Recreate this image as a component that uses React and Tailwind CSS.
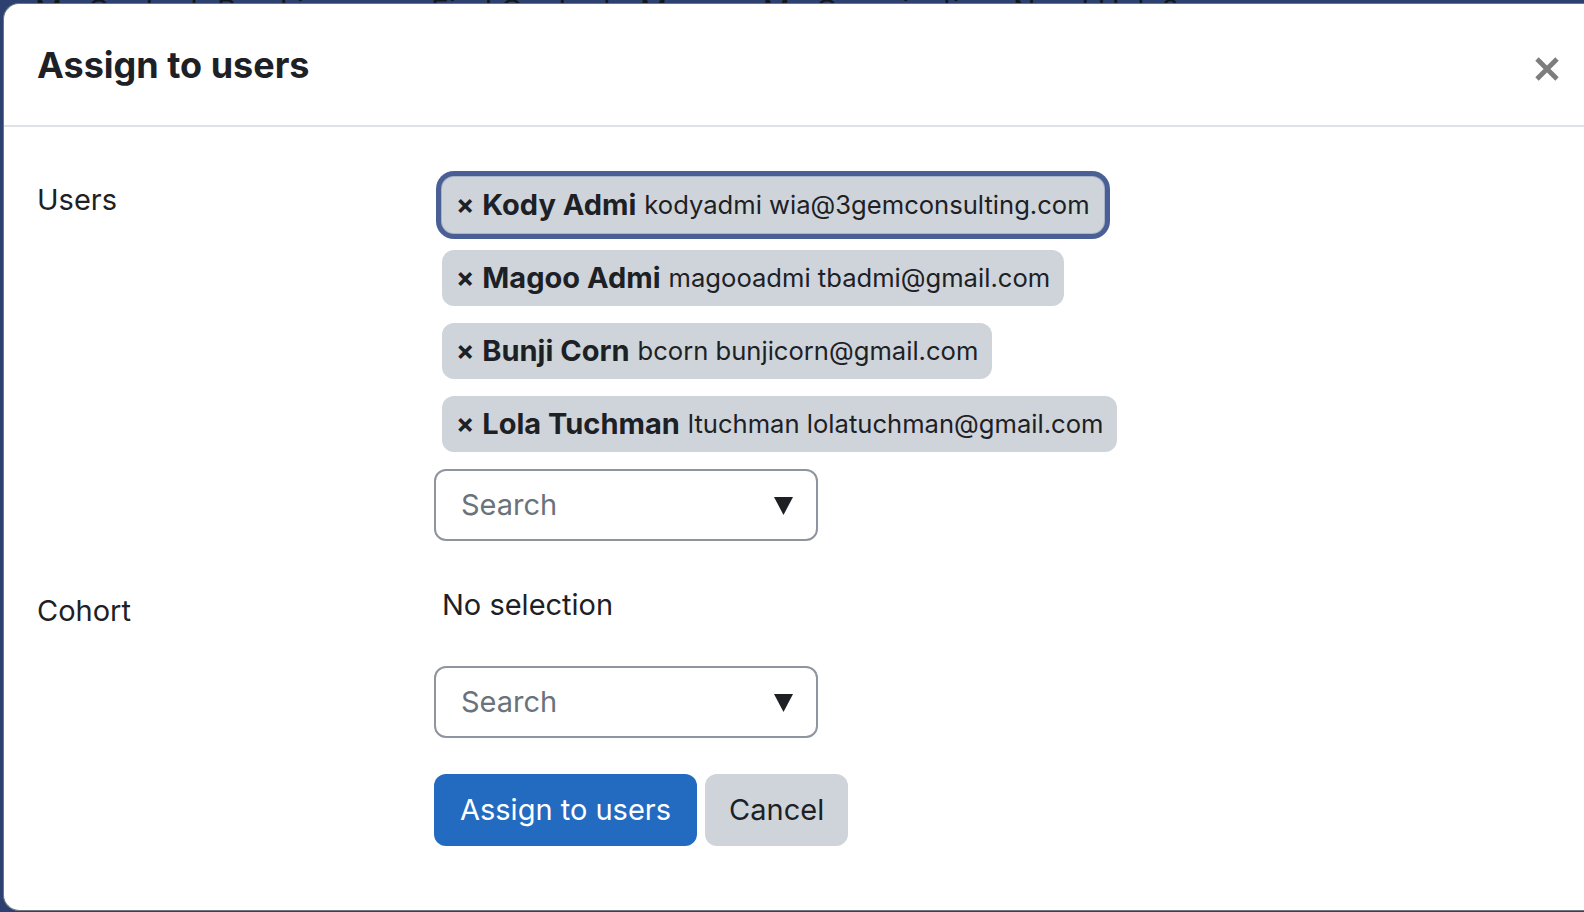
import React from 'react';

const users = [
    { name: 'Kody Admi', info: 'kodyadmi wia@3gemconsulting.com', focused: true },
    { name: 'Magoo Admi', info: 'magooadmi tbadmi@gmail.com' },
    { name: 'Bunji Corn', info: 'bcorn bunjicorn@gmail.com' },
    { name: 'Lola Tuchman', info: 'ltuchman lolatuchman@gmail.com' },
];

const navItems = [
    ['My Content', 'w-[182px]'],
    ['Buy Licenses', 'w-[214px]'],
    ['Find Content', 'w-[209px]'],
    ['Manage My Organization', 'w-[373px]'],
    ['Need Help?', 'w-[180px]'],
];

function SearchSelect() {
    return (
        <div className="w-[384px] h-[72px] border-2 border-[#8f959e] rounded-[12px] flex items-center justify-between pl-[25px] pr-[23px] bg-white">
            <span className="text-[29px] text-[#6a737b]">Search</span>
            <svg width="19" height="19" viewBox="0 0 19 19">
                <polygon points="0,1 19,1 9.5,19" fill="#1d2125" />
            </svg>
        </div>
    );
}

function UserChip({ name, info, focused }) {
    return (
        <div
            className={`h-[56px] flex items-center px-[14px] rounded-[12px] bg-[#ced4da] text-[#1d2125] whitespace-nowrap ${focused ? 'shadow-[0_0_0_1px_#aab4c8,0_0_0_6px_#4a5f95]' : ''}`}
        >
            <span className="text-[27px] font-bold mr-[8px]">×</span>
            <span className="text-[29px] font-bold mr-[8px]">{name}</span>
            <span className="text-[25.6px]">{info}</span>
        </div>
    );
}

export default function App() {
    return (
        <div
            className="relative w-[1584px] h-[912px] overflow-hidden bg-[#2c4170]"
            style={{ fontFamily: 'Inter, "Noto Sans", sans-serif' }}
        >
            {/* page nav behind the backdrop, only its top edge shows */}
            <div className="absolute top-[-5px] left-[35px] flex text-[30px] leading-[30px] text-[#14181c]">
                {navItems.map(([t, w]) => (
                    <span key={t} className={w}>{t}</span>
                ))}
            </div>

            <div className="relative z-10 mt-[3px] ml-[3px] h-[908px] bg-white rounded-l-[16px] border border-r-0 border-[#6f7580] text-[#1d2125]">
                {/* header */}
                <div className="h-[123px] flex items-center justify-between pl-[33px] pr-[24px] border-b-2 border-[#dee2e6]">
                    <h2 className="text-[36px] font-bold">Assign to users</h2>
                    <button className="mt-[8px] text-[#7d7d7d]">
                        <svg width="26" height="26" viewBox="0 0 26 26">
                            <path d="M3 3 L23 23 M23 3 L3 23" stroke="currentColor" strokeWidth="4.8" strokeLinecap="butt" />
                        </svg>
                    </button>
                </div>

                {/* body */}
                <div className="pl-[33px] pt-[50px]">
                    <div className="flex">
                        <div className="w-[397px] text-[29px] leading-[45px]">Users</div>
                        <div className="flex flex-col">
                            <div className="flex flex-col items-start gap-[17px] pl-[8px]">
                                {users.map((u) => (
                                    <UserChip key={u.name} {...u} />
                                ))}
                            </div>
                            <div className="mt-[17px]">
                                <SearchSelect />
                            </div>
                        </div>
                    </div>

                    <div className="flex mt-[41px]">
                        <div className="w-[397px] text-[29px] leading-[45px] mt-[6px]">Cohort</div>
                        <div className="flex flex-col">
                            <div className="pl-[8px] text-[29px] leading-[45px]">No selection</div>
                            <div className="mt-[39px]">
                                <SearchSelect />
                            </div>
                            <div className="mt-[36px] flex gap-[8px]">
                                <button className="h-[72px] px-[26px] rounded-[12px] bg-[#236bc1] text-white text-[29px]">
                                    Assign to users
                                </button>
                                <button className="h-[72px] px-[24px] rounded-[12px] bg-[#ced4da] text-[#1d2125] text-[29px]">
                                    Cancel
                                </button>
                            </div>
                        </div>
                    </div>
                </div>
            </div>
        </div>
    );
}
